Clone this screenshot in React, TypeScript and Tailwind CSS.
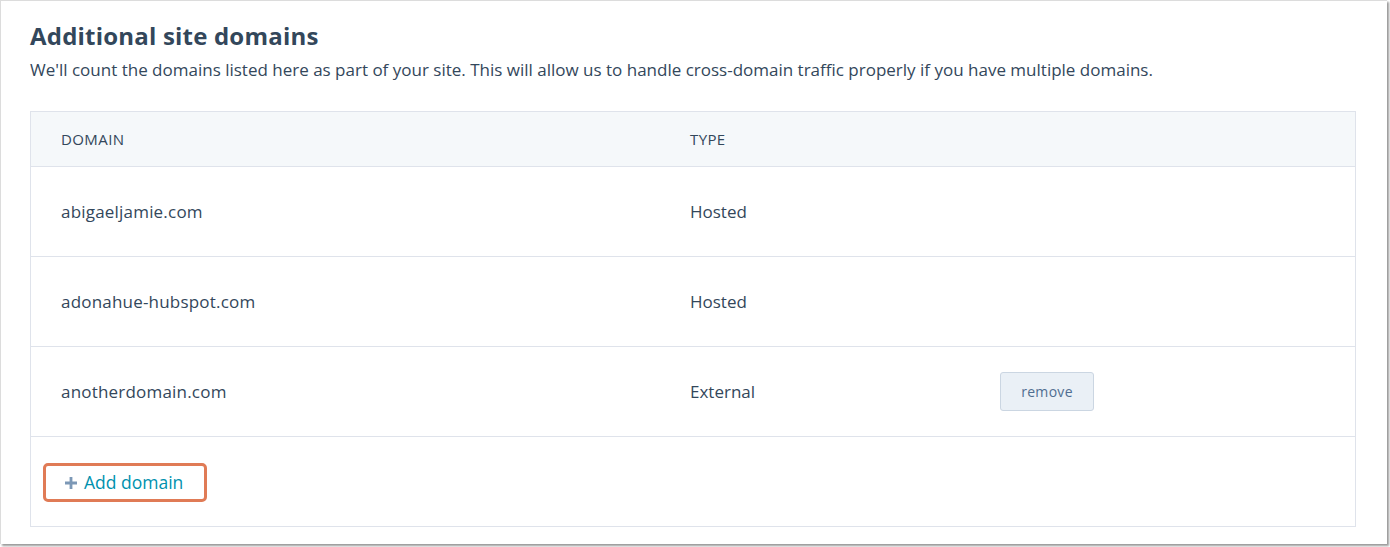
const rows = [
  { domain: "abigaeljamie.com", type: "Hosted", removable: false },
  { domain: "adonahue-hubspot.com", type: "Hosted", removable: false },
  { domain: "anotherdomain.com", type: "External", removable: true },
];

export default function App() {
  return (
    <div className="w-[1390px] h-[547px] bg-white" style={{ fontFamily: "'Open Sans', Lato, sans-serif" }}>
      <div className="w-[1387px] h-[544px] border-l border-t border-[#dcdcdc] shadow-[2px_2px_2px_rgba(0,0,0,0.4)] pl-[29px] pr-[30px] pt-[19px] text-[#33475b]">
        <h2 className="text-[24px] leading-[32px] font-bold tracking-[0.2px]">Additional site domains</h2>
        <p className="text-[17px] leading-[24px] mt-[6px]">
          We'll count the domains listed here as part of your site. This will allow us to handle cross-domain traffic properly if you have multiple domains.
        </p>

        <div className="mt-[29px] w-[1326px] border border-[#dfe3eb]">
          {/* header */}
          <div className="flex h-[55px] items-center bg-[#f5f8fa] border-b border-[#dfe3eb] text-[15px] tracking-[0.4px] uppercase">
            <div className="w-[629px] pl-[30px]">Domain</div>
            <div className="pl-[30px]">Type</div>
          </div>

          {rows.map((r) => (
            <div key={r.domain} className="flex h-[90px] items-center border-b border-[#dfe3eb] text-[17px]">
              <div className="w-[629px] pl-[30px] tracking-[0.2px]">{r.domain}</div>
              <div className="w-[340px] pl-[30px]">{r.type}</div>
              {r.removable && (
                <button className="w-[94px] h-[39px] rounded-[3px] bg-[#eaf0f6] border border-[#cbd6e2] text-[14px] tracking-[0.3px] text-[#506e91]">
                  remove
                </button>
              )}
            </div>
          ))}

          {/* footer with highlighted add link */}
          <div className="h-[89px] flex items-center pl-[12px] pt-[2px]">
            <div className="w-[164px] h-[39px] border-[3px] border-[#e07b56] rounded-[5px] flex items-center pl-[18px] gap-[6px] text-[#0091ae] text-[17.5px]">
              <svg width="14" height="14" viewBox="0 0 14 14">
                <path d="M7 1v12M1 7h12" stroke="#7c98b6" strokeWidth="2.8" />
              </svg>
              <span>Add domain</span>
            </div>
          </div>
        </div>
      </div>
    </div>
  );
}
